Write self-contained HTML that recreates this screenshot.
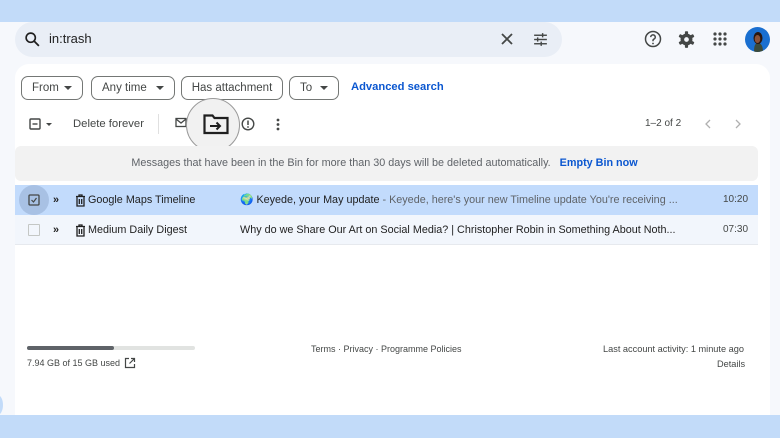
<!DOCTYPE html>
<html><head><meta charset="utf-8"><style>
*{box-sizing:border-box;margin:0;padding:0}
body{width:780px;height:438px;overflow:hidden;background:#f6f8fc;font-family:"Liberation Sans",Arial,sans-serif;color:#1f1f1f;position:relative}
.top{position:absolute;left:0;top:0;width:780px;height:22px;background:#c2dbf9}
.bot{position:absolute;left:0;top:415px;width:780px;height:23px;background:#c2dbf9}
.search{position:absolute;left:15px;top:22px;width:547px;height:35px;background:#e9eef6;border-radius:18px}
.abs{position:absolute;white-space:nowrap}
.card{position:absolute;left:15px;top:64px;width:755px;height:351px;background:#fff;border-radius:14px 14px 0 0}
.chip{position:absolute;top:76px;height:24px;border:1px solid #747775;border-radius:7px;font-size:11.5px;line-height:22px;padding:0 10px;color:#444746;white-space:nowrap;display:flex;justify-content:space-between;align-items:center}
.caret{display:inline-block;width:0;height:0;border-left:4px solid transparent;border-right:4px solid transparent;border-top:4px solid #444746}
.banner{position:absolute;left:15px;top:146px;width:743px;height:35px;background:#f2f2f2;border-radius:6px;font-size:10.8px;color:#5f6368;text-align:center;line-height:35px}
.row{position:absolute;left:15px;width:743px;height:30px;font-size:10.8px;line-height:30px}
.t{position:absolute;font-size:12px;white-space:nowrap}
</style></head><body>
<div class="top"></div>
<div class="search">
<svg class="abs" style="left:9px;top:9px" width="17" height="17" viewBox="0 0 24 24"><circle cx="9.5" cy="9.5" r="6.5" fill="none" stroke="#1f1f1f" stroke-width="2.3"/><path d="M14.5 14.5L21 21" stroke="#1f1f1f" stroke-width="2.5"/></svg>
<div class="abs" style="left:34px;top:9px;font-size:13px">in:trash</div>
<svg class="abs" style="left:485px;top:10px" width="14" height="14" viewBox="0 0 14 14"><path d="M2 2L12 12M12 2L2 12" stroke="#444746" stroke-width="1.8"/></svg>
<svg class="abs" style="left:517px;top:9px" width="17" height="17" viewBox="0 0 24 24" fill="#444746"><rect x="3" y="5" width="18" height="2"/><rect x="3" y="11" width="18" height="2"/><rect x="3" y="17" width="18" height="2"/><rect x="14" y="3" width="2" height="6"/><rect x="7" y="9" width="2" height="6"/><rect x="12" y="15" width="2" height="6"/></svg>
</div>
<svg class="abs" style="left:644px;top:30px" width="18" height="18" viewBox="0 0 24 24"><circle cx="12" cy="12" r="10" fill="none" stroke="#444746" stroke-width="2"/><path d="M9 9.5a3 3 0 1 1 4 2.8c-.8.4-1 1-1 1.7V15" fill="none" stroke="#444746" stroke-width="2"/><circle cx="12" cy="18" r="1.2" fill="#444746"/></svg>
<svg class="abs" style="left:677px;top:30px" width="19" height="19" viewBox="0 0 24 24"><g fill="#444746"><circle cx="12" cy="12" r="7.5"/><g id="tt"><rect x="10" y="1.5" width="4" height="5" rx="1"/><rect x="10" y="17.5" width="4" height="5" rx="1"/></g><use href="#tt" transform="rotate(60 12 12)"/><use href="#tt" transform="rotate(120 12 12)"/></g><circle cx="12" cy="12" r="3" fill="#f6f8fc"/></svg>
<svg class="abs" style="left:713px;top:32px" width="14" height="14" viewBox="0 0 14 14" fill="#444746"><circle cx="2" cy="2" r="1.6"/><circle cx="7" cy="2" r="1.6"/><circle cx="12" cy="2" r="1.6"/><circle cx="2" cy="7" r="1.6"/><circle cx="7" cy="7" r="1.6"/><circle cx="12" cy="7" r="1.6"/><circle cx="2" cy="12" r="1.6"/><circle cx="7" cy="12" r="1.6"/><circle cx="12" cy="12" r="1.6"/></svg>
<svg class="abs" style="left:745px;top:27px" width="25" height="25" viewBox="0 0 25 25"><defs><clipPath id="c"><circle cx="12.5" cy="12.5" r="12.5"/></clipPath></defs><g clip-path="url(#c)"><rect width="25" height="25" fill="#1a6fd0"/><path d="M9 25c0-6 1-9 4-9s5 3 5 9z" fill="#3b4a3a"/><ellipse cx="13" cy="11" rx="4.5" ry="6" fill="#2a160e"/><ellipse cx="12.5" cy="12" rx="2.8" ry="4" fill="#8a5238"/></g></svg>
<div class="card"></div>
<div class="chip" style="left:21px;width:62px">From<span class="caret"></span></div>
<div class="chip" style="left:91px;width:84px">Any time<span class="caret"></span></div>
<div class="chip" style="left:181px;width:102px;justify-content:center">Has attachment</div>
<div class="chip" style="left:289px;width:50px">To<span class="caret"></span></div>
<div class="t" style="left:351px;top:81px;color:#0b57d0;font-weight:bold;font-size:11.2px">Advanced search</div>
<svg class="abs" style="left:29px;top:118px" width="12" height="12" viewBox="0 0 12 12"><rect x="1" y="1" width="10" height="10" rx="1" fill="none" stroke="#444746" stroke-width="1.4"/><path d="M3.5 6h5" stroke="#444746" stroke-width="1.4"/></svg>
<div class="abs" style="left:46px;top:123px;border-left:3px solid transparent;border-right:3px solid transparent;border-top:3px solid #444746"></div>
<div class="t" style="left:73px;top:118px;color:#444746;font-size:11.3px">Delete forever</div>
<div class="abs" style="left:158px;top:114px;width:1px;height:20px;background:#e0e0e0"></div>
<svg class="abs" style="left:175px;top:117px" width="12" height="11" viewBox="0 0 12 11"><rect x="1" y="1.5" width="10" height="8" fill="none" stroke="#444746" stroke-width="1.3"/><path d="M1 2l5 4 5-4" fill="none" stroke="#444746" stroke-width="1.3"/></svg>
<div class="abs" style="left:186px;top:98px;width:54px;height:54px;border-radius:50%;background:#f1f1f1;border:1px solid #9a9a9a"></div>
<svg class="abs" style="left:203px;top:113px" width="26" height="22" viewBox="0 0 26 22"><path d="M1.5 2.5h8l2 2.5h13v15h-23z" fill="none" stroke="#1f1f1f" stroke-width="2.2"/><path d="M7 13h10M13.5 9.5L17 13l-3.5 3.5" fill="none" stroke="#1f1f1f" stroke-width="2"/></svg>
<svg class="abs" style="left:241px;top:117px" width="14" height="14" viewBox="0 0 14 14"><circle cx="7" cy="7" r="5.8" fill="none" stroke="#444746" stroke-width="1.4"/><path d="M7 3.5v4.5" stroke="#444746" stroke-width="1.5"/><circle cx="7" cy="10" r=".9" fill="#444746"/></svg>
<svg class="abs" style="left:276px;top:118px" width="4" height="13" viewBox="0 0 4 13" fill="#444746"><circle cx="2" cy="2" r="1.4"/><circle cx="2" cy="6.5" r="1.4"/><circle cx="2" cy="11" r="1.4"/></svg>
<div class="t" style="left:645px;top:118px;color:#444746;font-size:10px">1–2 of 2</div>
<svg class="abs" style="left:704px;top:119px" width="8" height="10" viewBox="0 0 8 10"><path d="M6 1L2 5l4 4" fill="none" stroke="#b0b0b0" stroke-width="1.3"/></svg>
<svg class="abs" style="left:734px;top:119px" width="8" height="10" viewBox="0 0 8 10"><path d="M2 1l4 4-4 4" fill="none" stroke="#b0b0b0" stroke-width="1.3"/></svg>
<div class="banner"><span style="margin-left:-4px">Messages that have been in the Bin for more than 30 days will be deleted automatically.</span> <span style="color:#0b57d0;font-weight:bold;margin-left:6px">Empty Bin now</span></div>
<div class="row" style="top:185px;background:#c2dbfc">
<div class="abs" style="left:4px;top:0;width:30px;height:30px;border-radius:50%;background:#a8c1e4"></div>
<svg class="abs" style="left:13px;top:9px" width="12" height="12" viewBox="0 0 12 12"><rect x="1" y="1" width="10" height="10" rx="1" fill="none" stroke="#444746" stroke-width="1.3"/><path d="M3.5 6l2 2 3-4" fill="none" stroke="#444746" stroke-width="1.2"/></svg>
<div class="abs" style="left:38px;top:0;font-weight:bold">»</div>
<svg class="abs" style="left:60px;top:9px" width="11" height="13" viewBox="0 0 11 13"><path d="M1 2.5h9M4 2.5V1h3v1.5M2 2.5v9.5h7V2.5M4.3 5v5M6.7 5v5" fill="none" stroke="#1f1f1f" stroke-width="1.3"/></svg>
<div class="abs" style="left:73px;top:0">Google Maps Timeline</div>
<div class="abs" style="left:225px;top:0">🌍 Keyede, your May update <span style="color:#5f6368">- Keyede, here's your new Timeline update You're receiving ...</span></div>
<div class="abs" style="left:708px;top:0;font-size:10px;color:#444746">10:20</div>
</div>
<div class="row" style="top:215px;background:#f2f6fc;border-bottom:1px solid #e6e9ee">
<div class="abs" style="left:13px;top:9px;width:12px;height:12px;border:1.3px solid #c4c7c5;border-radius:1px"></div>
<div class="abs" style="left:38px;top:0;font-weight:bold">»</div>
<svg class="abs" style="left:60px;top:9px" width="11" height="13" viewBox="0 0 11 13"><path d="M1 2.5h9M4 2.5V1h3v1.5M2 2.5v9.5h7V2.5M4.3 5v5M6.7 5v5" fill="none" stroke="#1f1f1f" stroke-width="1.3"/></svg>
<div class="abs" style="left:73px;top:0">Medium Daily Digest</div>
<div class="abs" style="left:225px;top:0">Why do we Share Our Art on Social Media? | Christopher Robin in Something About Noth...</div>
<div class="abs" style="left:708px;top:0;font-size:10px;color:#444746">07:30</div>
</div>
<div class="abs" style="left:27px;top:346px;width:168px;height:4px;background:#e1e3e1;border-radius:2px"><div style="width:87px;height:4px;background:#5f6368;border-radius:2px"></div></div>
<div class="t" style="left:27px;top:358px;font-size:9px;color:#444746">7.94 GB of 15 GB used</div>
<svg class="abs" style="left:124px;top:357px" width="12" height="12" viewBox="0 0 12 12"><path d="M5 1.5H1.5v9h9V7M7 1.5h3.5V5M10.5 1.5L5.5 6.5" fill="none" stroke="#444746" stroke-width="1.2"/></svg>
<div class="t" style="left:311px;top:344px;font-size:9px;color:#444746">Terms · Privacy · Programme Policies</div>
<div class="t" style="left:603px;top:344px;font-size:9.2px;color:#444746">Last account activity: 1 minute ago</div>
<div class="t" style="left:717px;top:359px;font-size:9.2px;color:#444746">Details</div>
<div class="abs" style="left:-8px;top:395px;width:11px;height:20px;border-radius:50%;background:#c2dbf9"></div>
<div class="bot"></div>
</body></html>
